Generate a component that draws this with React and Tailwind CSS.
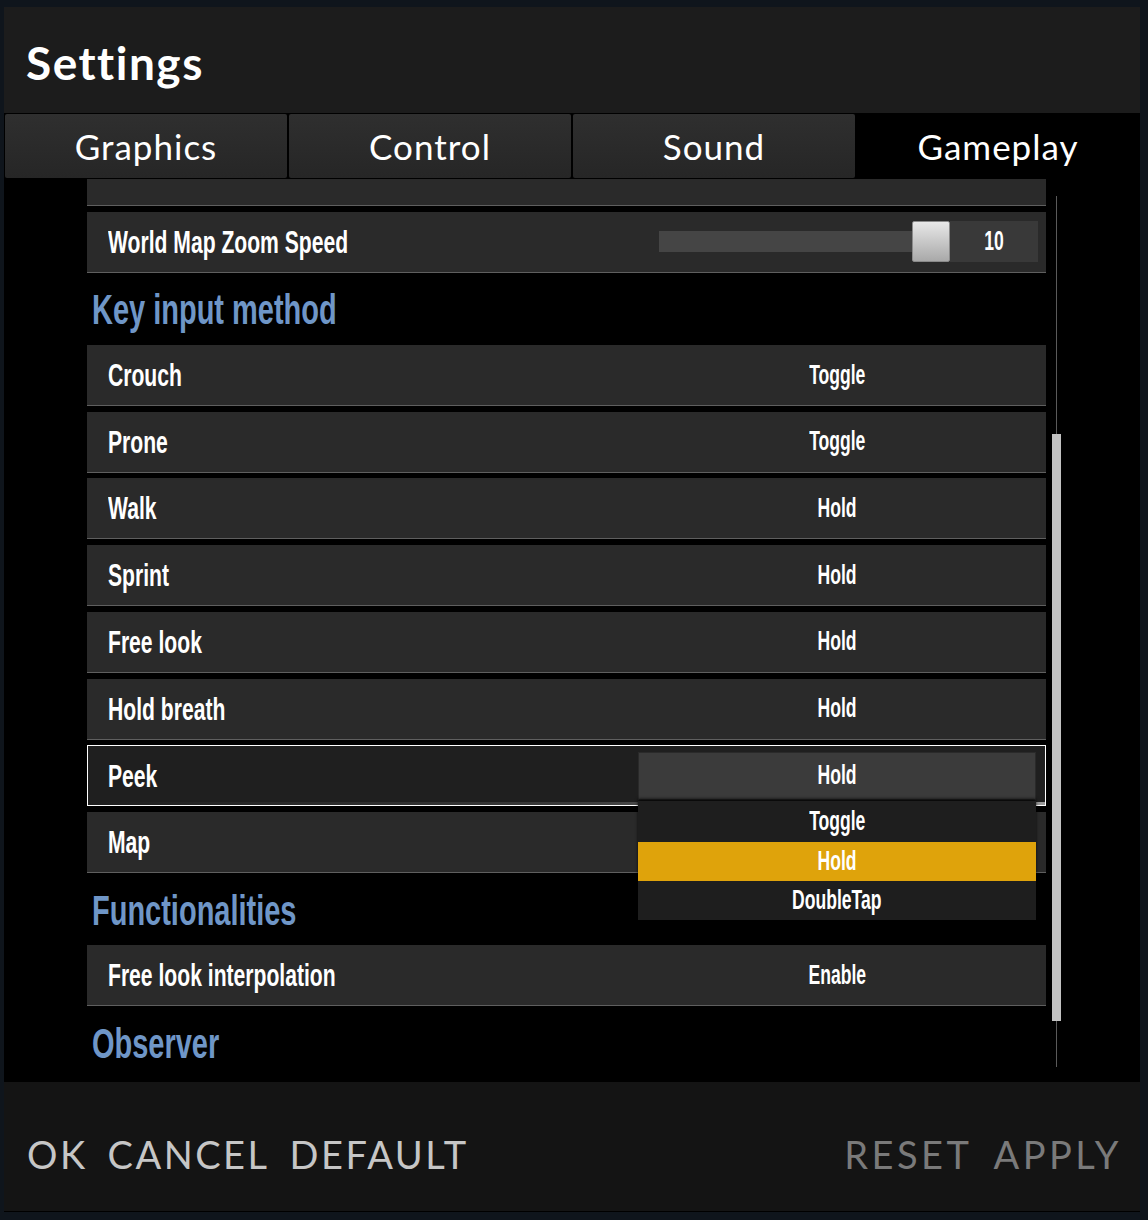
import React from 'react';

const narrow = { fontFamily: '"Liberation Sans", Arial, sans-serif' };
const wide = { fontFamily: 'Lato, "Open Sans", sans-serif' };

const keyRows = [
  { label: 'Crouch', value: 'Toggle' },
  { label: 'Prone', value: 'Toggle' },
  { label: 'Walk', value: 'Hold' },
  { label: 'Sprint', value: 'Hold' },
  { label: 'Free look', value: 'Hold' },
  { label: 'Hold breath', value: 'Hold' },
  { label: 'Peek', value: 'Hold', open: true },
  { label: 'Map', value: 'Hold', covered: true },
];

// condensed look: the game font is much narrower than anything installed
const Label = ({ children }) => (
  <span className="inline-block origin-left scale-x-[0.66] whitespace-nowrap pt-[2px] text-[32px] font-bold leading-none text-white">
    {children}
  </span>
);

const Value = ({ children, className = '' }) => (
  <span className={`inline-block origin-center scale-x-[0.65] whitespace-nowrap text-[27px] font-bold leading-none text-white ${className}`}>
    {children}
  </span>
);

const Row = ({ label, value, open, covered }) => {
  if (open) {
    return (
      <div className="relative flex h-[61px] shrink-0 items-center border border-white bg-[#1f1f1f]">
        <div className="absolute bottom-0 left-0 right-0 h-[3px] bg-gradient-to-r from-transparent via-[#3a3a3a] to-[#9a9a9a]"></div>
        <div className="flex-1 pl-[20px]">
          <Label>{label}</Label>
        </div>
        <div className="mr-[9px] flex h-[48px] w-[398px] items-center justify-center border border-[#2a2a2a] bg-[#3b3b3b]">
          <Value>{value}</Value>
        </div>
        {/* dropdown list */}
        <div className="absolute left-[550px] top-[55px] z-20 w-[398px] bg-[#1e1e1e] shadow-[0_-2px_3px_rgba(0,0,0,0.8)]">
          <div className="flex h-[41px] items-center justify-center"><Value>Toggle</Value></div>
          <div className="flex h-[39px] items-center justify-center bg-[#dfa30b]"><Value>Hold</Value></div>
          <div className="flex h-[39px] items-center justify-center"><Value>DoubleTap</Value></div>
        </div>
      </div>
    );
  }
  return (
    <div className="flex h-[61px] shrink-0 items-center border-b border-[#5f5f5f] bg-[#2a2a2a]">
      <div className="flex-1 pl-[21px]">
        <Label>{label}</Label>
      </div>
      <div className={`mr-[10px] flex w-[398px] justify-center ${covered ? 'invisible' : ''}`}>
        <Value>{value}</Value>
      </div>
    </div>
  );
};

const Heading = ({ children }) => (
  <div className="flex h-[61px] shrink-0 items-center pl-[5px]">
    <span className="inline-block origin-left scale-x-[0.69] whitespace-nowrap pt-[3px] text-[42px] font-bold leading-none text-[#6f96c7]">
      {children}
    </span>
  </div>
);

export default function App() {
  return (
    <div className="h-[1220px] w-[1148px] bg-[#0f151c] pl-[4px] pt-[7px]">
      <div className="flex h-[1205px] w-[1136px] flex-col bg-black">
        {/* header */}
        <div className="flex h-[106px] items-center bg-[#1c1c1c] pl-[22px]" style={wide}>
          <h1 className="pt-[4px] text-[46px] font-bold tracking-[1.5px] text-white">Settings</h1>
        </div>

        {/* tabs */}
        <div className="grid h-[66px] grid-cols-4 gap-[2px] border-t border-black bg-black px-[1px] pb-[1px]" style={wide}>
          {['Graphics', 'Control', 'Sound', 'Gameplay'].map((t, i) => (
            <div
              key={t}
              className={`flex items-center justify-center text-[35px] tracking-[1px] text-white ${
                i === 3 ? 'bg-black' : 'rounded-[2px] bg-gradient-to-b from-[#2f2f2f] to-[#262626]'
              }`}
            >
              {t}
            </div>
          ))}
        </div>

        {/* content */}
        <div className="flex h-[903px] overflow-hidden pl-[83px]" style={narrow}>
          <div className="flex w-[959px] flex-col gap-[5.7px]">
            <div className="-mt-[34px] h-[61px] shrink-0 border-b border-[#5f5f5f] bg-[#2a2a2a]"></div>

            <div className="flex h-[61px] shrink-0 items-center border-b border-[#5f5f5f] bg-[#2a2a2a]">
              <div className="flex-1 pl-[21px]">
                <Label>World Map Zoom Speed</Label>
              </div>
              <div className="mr-[8px] flex items-center">
                <div className="h-[21px] w-[253px] bg-[#454545]"></div>
                <div className="h-[41px] w-[38px] rounded-[2px] border border-[#8a8a8a] bg-gradient-to-b from-[#e8e8e8] to-[#a9a9a9]"></div>
                <div className="flex h-[41px] w-[88px] items-center justify-center bg-[#393939]">
                  <Value className="text-[22px]">10</Value>
                </div>
              </div>
            </div>

            <Heading>Key input method</Heading>
            {keyRows.map((r) => (
              <Row key={r.label} {...r} />
            ))}

            <Heading>Functionalities</Heading>
            <Row label="Free look interpolation" value="Enable" />

            <Heading>Observer</Heading>
          </div>

          {/* scrollbar */}
          <div className="relative ml-[6px] w-[9px]">
            <div className="absolute bottom-[15px] left-[4px] top-[17px] w-px bg-[#5a5a5a]"></div>
            <div className="absolute left-0 top-[255px] h-[587px] w-[9px] bg-[#c2c2c2]"></div>
          </div>
        </div>

        {/* footer */}
        <div className="flex h-[129px] items-center justify-between bg-[#141414] pl-[23px] pr-[18px] pt-[16px] text-[38px] tracking-[2.5px]" style={wide}>
          <div className="flex gap-[20px] text-[#c6c6c6]">
            <span>OK</span>
            <span>CANCEL</span>
            <span>DEFAULT</span>
          </div>
          <div className="flex gap-[21px] tracking-[3.5px] text-[#7a7a7a]">
            <span>RESET</span>
            <span>APPLY</span>
          </div>
        </div>
      </div>
    </div>
  );
}
